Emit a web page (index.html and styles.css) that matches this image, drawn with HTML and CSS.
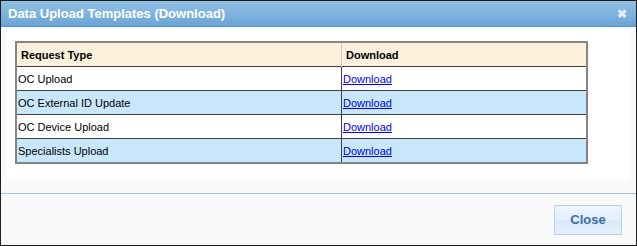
FILE: index.html
```html
<!DOCTYPE html>
<html lang="en">
<head>
	<meta charset="UTF-8">
	<title>Data Upload Templates</title>
	<link rel="stylesheet" href="styles.css">
</head>
<body>
	<div class="dialog">
		<div class="dialog-title">
			<span>Data Upload Templates (Download)</span>
			<span class="dialog-x">&#x2716;</span>
		</div>
		<div class="dialog-body">
			<div class="panel">
				<table class="grid">
					<tr class="head">
						<th class="col-type">Request Type</th>
						<th>Download</th>
					</tr>
					<tr>
						<td>OC Upload</td>
						<td><a href="#">Download</a></td>
					</tr>
					<tr class="alt">
						<td>OC External ID Update</td>
						<td><a href="#">Download</a></td>
					</tr>
					<tr>
						<td>OC Device Upload</td>
						<td><a href="#">Download</a></td>
					</tr>
					<tr class="alt">
						<td>Specialists Upload</td>
						<td><a href="#">Download</a></td>
					</tr>
				</table>
			</div>
		</div>
		<div class="dialog-foot">
			<button class="btn-close">Close</button>
		</div>
	</div>
</body>
</html>
```

FILE: styles.css
```css
	html, body{
		margin: 0; padding: 0;
		background: #fff;
	}
	.dialog{
		width: 637px;
		height: 246px;
		box-sizing: border-box;
		border: 1px solid #1e1e1e;
		display: flex;
		flex-direction: column;
		font-family: "Liberation Sans", Arial, sans-serif;
		background: #f8fafb;
	}
	.dialog-title{
		height: 25px;
		border-bottom: 1px solid #4d95d4;
		background: linear-gradient(#8fc0e4, #7db2dd 55%, #6aa3d3);
		color: #fff;
		font-weight: bold;
		font-size: 13px;
		display: flex;
		align-items: center;
		justify-content: space-between;
		padding: 0 9px 0 7px;
	}
	.dialog-x{
		font-size: 12px;
		color: #e3eef8;
	}
	.dialog-body{
		padding: 2px 6px 13px 6px;
		border-bottom: 1px solid #a8c3da;
	}
	.panel{
		background: #fff;
		padding: 12px 8px 16px 8px;
	}
	.grid{
		width: 573px;
		border-collapse: collapse;
		border: 2px solid #858585;
		font-size: 11px;
		color: #000;
	}
	.grid th{
		background: #fcf0dc;
		text-align: left;
		font-size: 11px;
		height: 23px;
		padding: 0 0 0 4px;
		border-left: 1px solid #c9c9c9;
	}
	.grid th.col-type{
		width: 320px;
	}
	.grid td{
		height: 23px;
		padding: 0 0 0 1px;
		border-top: 1px solid #404040;
		border-left: 1px solid #404040;
	}
	.grid tr.alt td{
		background: #c9e7fb;
	}
	.grid a{
		color: #0000ee;
	}
	.dialog-foot{
		flex: 1;
		display: flex;
		justify-content: flex-end;
		align-items: center;
		padding: 0 14px 0 0;
	}
	.btn-close{
		width: 68px;
		height: 30px;
		border: 1px solid #b7d1ea;
		background: linear-gradient(#eef6fe, #e3effc 50%, #d8e8fa 52%, #e6f1fd);
		color: #3c6fa4;
		font-family: "Liberation Sans", Arial, sans-serif;
		font-weight: bold;
		font-size: 13px;
		padding: 0;
		margin-top: 0;
	}
```
